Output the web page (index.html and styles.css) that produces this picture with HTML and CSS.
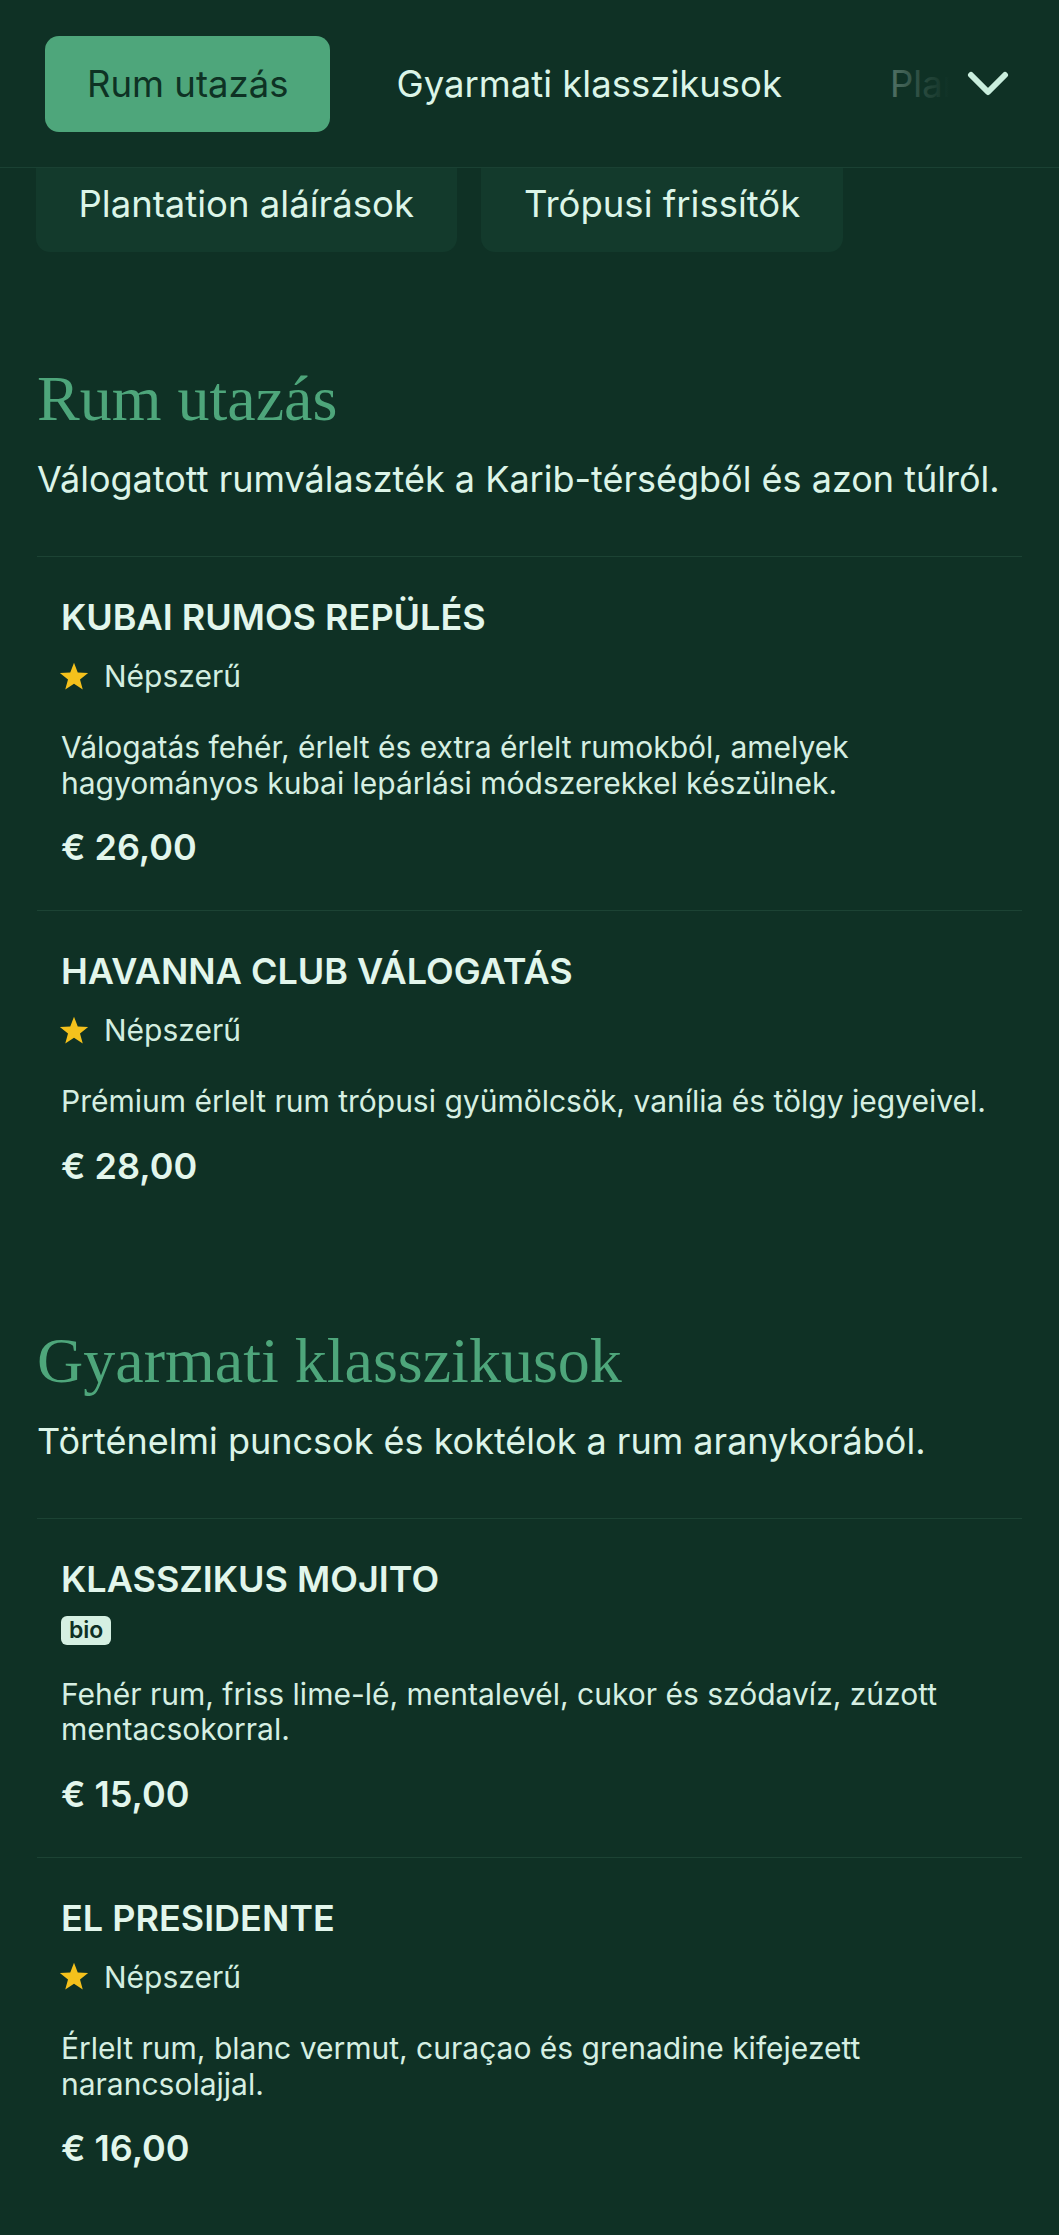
FILE: index.html
```html
<!DOCTYPE html>
<html lang="hu">
<head>
<meta charset="utf-8">
<title>Rum menü</title>
<link rel="stylesheet" href="styles.css">
</head>
<body>
<header class="topbar">
  <nav class="tabs">
    <a class="tab active">Rum utazás</a>
    <a class="tab">Gyarmati klasszikusok</a>
    <a class="tab">Plantation aláírások</a>
    <a class="tab">Trópusi frissítők</a>
  </nav>
  <div class="tabs-fade">
    <button class="toggle" aria-label="Kategóriák">
      <svg width="42" height="26" viewBox="0 0 42 26"><polyline points="4,4 21,21 38,4" fill="none" stroke="#c9eedd" stroke-width="6" stroke-linecap="round" stroke-linejoin="round"/></svg>
    </button>
  </div>
</header>
<div class="chips">
  <a class="chip">Plantation aláírások</a>
  <a class="chip">Trópusi frissítők</a>
</div>
<main class="menu">
  <section class="section first">
    <h2 class="section-title">Rum utazás</h2>
    <p class="section-sub">Válogatott rumválaszték a Karib-térségből és azon túlról.</p>
    <article class="item">
      <h3 class="item-name">KUBAI RUMOS REPÜLÉS</h3>
      <div class="tags"><span class="popular"><svg class="star" width="30" height="29" viewBox="0 0 24 23"><polygon points="12,0.5 15,8.2 23.3,8.6 16.8,13.8 19,21.9 12,17.3 5,21.9 7.2,13.8 0.7,8.6 9,8.2" fill="#f4c11c"/></svg>Népszerű</span></div>
      <p class="item-desc">Válogatás fehér, érlelt és extra érlelt rumokból, amelyek hagyományos kubai lepárlási módszerekkel készülnek.</p>
      <p class="item-price">€ 26,00</p>
    </article>
    <article class="item">
      <h3 class="item-name">HAVANNA CLUB VÁLOGATÁS</h3>
      <div class="tags"><span class="popular"><svg class="star" width="30" height="29" viewBox="0 0 24 23"><polygon points="12,0.5 15,8.2 23.3,8.6 16.8,13.8 19,21.9 12,17.3 5,21.9 7.2,13.8 0.7,8.6 9,8.2" fill="#f4c11c"/></svg>Népszerű</span></div>
      <p class="item-desc">Prémium érlelt rum trópusi gyümölcsök, vanília és tölgy jegyeivel.</p>
      <p class="item-price">€ 28,00</p>
    </article>
  </section>
  <section class="section">
    <h2 class="section-title">Gyarmati klasszikusok</h2>
    <p class="section-sub">Történelmi puncsok és koktélok a rum aranykorából.</p>
    <article class="item">
      <h3 class="item-name">KLASSZIKUS MOJITO</h3>
      <div class="tags"><span class="badge">bio</span></div>
      <p class="item-desc">Fehér rum, friss lime-lé, mentalevél, cukor és szódavíz, zúzott mentacsokorral.</p>
      <p class="item-price">€ 15,00</p>
    </article>
    <article class="item">
      <h3 class="item-name">EL PRESIDENTE</h3>
      <div class="tags"><span class="popular"><svg class="star" width="30" height="29" viewBox="0 0 24 23"><polygon points="12,0.5 15,8.2 23.3,8.6 16.8,13.8 19,21.9 12,17.3 5,21.9 7.2,13.8 0.7,8.6 9,8.2" fill="#f4c11c"/></svg>Népszerű</span></div>
      <p class="item-desc">Érlelt rum, blanc vermut, curaçao és grenadine kifejezett narancsolajjal.</p>
      <p class="item-price">€ 16,00</p>
    </article>
  </section>
</main>
</body>
</html>
```

FILE: styles.css
```css
* { box-sizing: border-box; }

html, body {
  margin: 0;
  padding: 0;
  background: #0f3125;
  color: #dcf4e8;
  font-family: Inter, "Noto Sans", "Liberation Sans", sans-serif;
}

.topbar {
  position: relative;
  height: 168px;
  border-bottom: 1px solid #1a4133;
  background: #0f3125;
  overflow: hidden;
}

.tabs {
  display: flex;
  gap: 24px;
  padding: 36px 0 0 45px;
  white-space: nowrap;
}

.tab {
  display: flex;
  align-items: center;
  height: 96px;
  padding: 0 42px;
  border-radius: 14px;
  font-size: 36.5px;
  line-height: 44px;
  color: #dcf5e8;
  flex: none;
}

.tab.active {
  background: #4ea67b;
  color: #0e3224;
}

.tabs-fade {
  position: absolute;
  top: 0;
  right: 0;
  height: 167px;
  width: 200px;
  display: flex;
  align-items: flex-start;
  justify-content: flex-end;
  padding: 71px 50px 0 0;
  background: linear-gradient(to right, rgba(15, 49, 37, 0.45) 0px, rgba(15, 49, 37, 0.8) 50px, #0f3125 90px);
}

.toggle {
  background: none;
  border: 0;
  padding: 0;
  width: 42px;
  height: 26px;
  display: block;
}

.chips {
  display: flex;
  gap: 24px;
  padding: 0 0 0 35.5px;
}

.chip {
  display: block;
  height: 84px;
  padding: 14px 43px 0;
  border-radius: 0 0 14px 14px;
  background: #133a2c;
  font-size: 36.5px;
  line-height: 44px;
  color: #dcf5e8;
  white-space: nowrap;
}

.menu {
  padding: 0 37px 40px;
}

.section { margin-top: 94px; }
.section.first { margin-top: 109px; }

.section-title {
  margin: 0;
  font-family: "Liberation Serif", "Times New Roman", serif;
  font-weight: 400;
  font-size: 64px;
  line-height: 75px;
  color: #4ea67b;
}

.section-sub {
  margin: 18px 0 51px;
  font-size: 36px;
  line-height: 51px;
  color: #dcf4e8;
}

.item {
  padding: 40px 24px 42px;
  border-top: 1px solid #1c4334;
}

.item-name {
  margin: 0;
  font-size: 36px;
  line-height: 41px;
  font-weight: 600;
  color: #e2f6ec;
}

.tags {
  display: flex;
  align-items: center;
  margin: 16px 0 32px;
}

.popular {
  display: flex;
  align-items: center;
  gap: 15px;
  height: 44px;
  font-size: 30px;
  color: #d3eee0;
}

.star { flex: none; margin-left: -2px; }

.badge {
  display: inline-flex;
  align-items: center;
  height: 29px;
  padding: 0 8px;
  border-radius: 6px;
  background: #d5f0e2;
  color: #0f3125;
  font-size: 23px;
  font-weight: 600;
}

.item-desc {
  margin: 0;
  font-size: 30px;
  line-height: 35.6px;
  color: #d6efe2;
}

.item-price {
  margin: 26px 0 0;
  font-size: 36px;
  line-height: 41px;
  font-weight: 600;
  color: #e2f6ec;
}
```
